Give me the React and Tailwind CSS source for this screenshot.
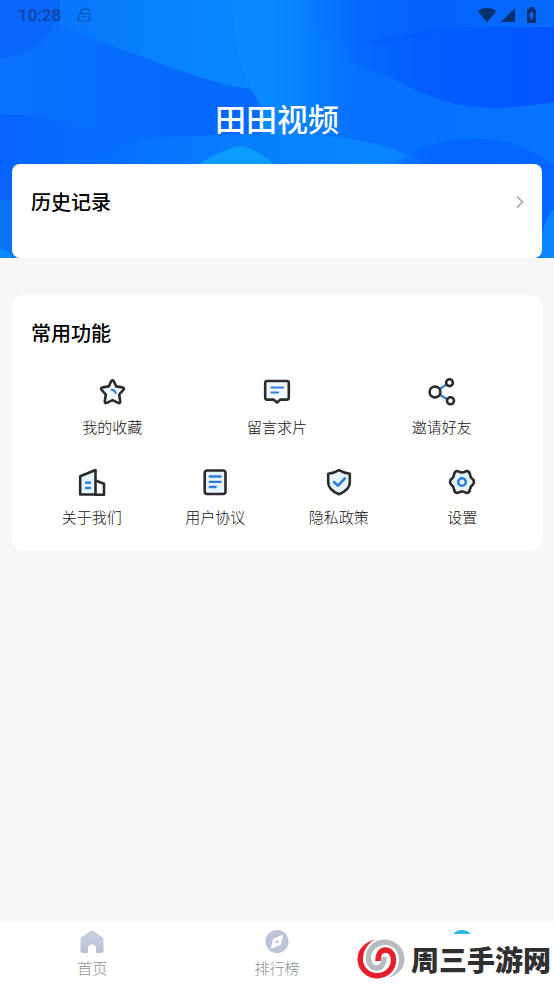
import React from "react";

const INK = "#2b2b2b";
const BLUE = "#2f7fd6";
const TINT = "#e6f4fd";

const Icon = ({ children }) => (
  <svg
    className="size-7"
    viewBox="0 0 28 28"
    fill="none"
    stroke={INK}
    strokeWidth="2.600"
    strokeLinecap="round"
    strokeLinejoin="round"
    aria-hidden="true"
  >
    {children}
  </svg>
);

const StarIcon = () => (
  <Icon>
    <path
      d="M14.500 2.200c.6 0 1 .4 1.300 1l2.400 5.200 6.300 1c1.500.3 1.900 1.400.9 2.400l-4.200 4.700 1 6.800c.2 1.500-.8 2.200-2 1.500l-5.700-2.700-5.700 2.700c-1.200.7-2.200 0-2-1.500l1-6.800-4.200-4.700c-1-1-.6-2.100.9-2.400l6.300-1 2.400-5.200c.3-.6.700-1 1.300-1z"
      fill="#f3fafe"
    />
    <path d="M13.500 11.800c2.200 0 3.600 1.300 4.200 3.200" stroke={BLUE} strokeWidth="2" />
  </Icon>
);

const MessageIcon = () => (
  <Icon>
    <path
      d="M4 3h20a1.800 1.800 0 0 1 1.800 1.800v15a1.800 1.800 0 0 1-1.800 1.800h-6.500L14 24.600l-3.500-3H4a1.800 1.800 0 0 1-1.800-1.800v-15A1.800 1.800 0 0 1 4 3z"
      fill="#f3fafe"
    />
    <path d="M8.500 9.500h11.500M8.500 14.500h6.500" stroke={BLUE} strokeWidth="2.200" />
  </Icon>
);

const ShareIcon = () => (
  <Icon>
    <path d="M12.500 10.500l5.500-3.600M12.500 17.300l5.500 3.200" stroke={BLUE} strokeWidth="2.200" />
    <circle cx="7" cy="14" r="5.400" fill="#fff" />
    <circle cx="21.500" cy="4.700" r="3.400" fill="#fff" />
    <circle cx="22.500" cy="22.800" r="3.500" fill="#fff" />
  </Icon>
);

const BuildingIcon = () => (
  <Icon>
    <path d="M17.500 12.500l8.500 3.200v11h-8.500" />
    <path d="M2.200 26.500V8.200L17.500 2v24.500z" fill={TINT} />
    <path d="M8 14.800h4M8 20h4" stroke={BLUE} strokeWidth="2.400" />
  </Icon>
);

const DocumentIcon = () => (
  <Icon>
    <rect x="3.700" y="2.500" width="20.800" height="23.500" rx="2.500" fill={TINT} />
    <path d="M8.700 8.500h11M8.700 13.800h11M8.700 19h6" stroke={BLUE} strokeWidth="2.300" />
  </Icon>
);

const ShieldIcon = () => (
  <Icon>
    <path
      d="M14 2.200c3 2 6.500 3 10.800 3.500v8.800c0 5.500-4.800 9.200-10.800 11.800C8 23.700 3.200 20 3.200 14.500V5.700C7.500 5.200 11 4.200 14 2.200z"
      fill={TINT}
    />
    <path d="M9 14l4 3.700 6.800-7.200" stroke={BLUE} strokeWidth="2.600" />
  </Icon>
);

const GearIcon = () => (
  <Icon>
    <path
      d="M9.300 3c1.400 0 2 1.500 4.700 1.500S17.300 3 18.700 3c1.500 0 3 1.500 3.300 3.700.2 2.500.8 3.300 2.600 4.500 1.800 1.200 1.800 4.400 0 5.600-1.800 1.200-2.400 2-2.600 4.500-.3 2.200-1.800 3.700-3.300 3.700-1.400 0-2-1.500-4.700-1.500S10.700 25 9.300 25C7.800 25 6.300 23.500 6 21.300c-.2-2.500-.8-3.300-2.600-4.500-1.800-1.200-1.800-4.400 0-5.600C5.200 10 5.800 9.200 6 6.700 6.300 4.500 7.800 3 9.300 3z"
      fill={TINT}
    />
    <circle cx="14" cy="14" r="3.800" stroke={BLUE} strokeWidth="2.600" />
  </Icon>
);

const featureRows = [
  [
    { label: "我的收藏", icon: StarIcon },
    { label: "留言求片", icon: MessageIcon },
    { label: "邀请好友", icon: ShareIcon },
  ],
  [
    { label: "关于我们", icon: BuildingIcon },
    { label: "用户协议", icon: DocumentIcon },
    { label: "隐私政策", icon: ShieldIcon },
    { label: "设置", icon: GearIcon },
  ],
];

const HeroBackground = () => (
  <svg
    className="absolute inset-0 size-full"
    viewBox="0 0 554 258"
    preserveAspectRatio="none"
    aria-hidden="true"
  >
    <defs>
      <linearGradient id="base" x1="0" x2="1">
        <stop offset="0" stopColor="#0a72fd" />
        <stop offset="0.35" stopColor="#0669fe" />
        <stop offset="1" stopColor="#0670ff" />
      </linearGradient>
      <linearGradient id="band" x1="0" x2="1">
        <stop offset="0" stopColor="#0876fd" />
        <stop offset="0.5" stopColor="#0782fe" />
        <stop offset="1" stopColor="#0787ff" />
      </linearGradient>
      <linearGradient id="mid" x1="0" x2="1">
        <stop offset="0" stopColor="#098bff" />
        <stop offset="0.12" stopColor="#088aff" />
        <stop offset="0.4" stopColor="#066fff" />
        <stop offset="1" stopColor="#0774ff" />
      </linearGradient>
      <linearGradient id="dark" x1="0" x2="1">
        <stop offset="0" stopColor="#0359ff" stopOpacity="0" />
        <stop offset="0.4" stopColor="#0359ff" stopOpacity="0.8" />
        <stop offset="1" stopColor="#0254ff" />
      </linearGradient>
      <linearGradient id="darkTop" x1="0" x2="1">
        <stop offset="0" stopColor="#0357fa" stopOpacity="0" />
        <stop offset="0.5" stopColor="#0357fa" stopOpacity="0.6" />
        <stop offset="1" stopColor="#0357fa" stopOpacity="0.3" />
      </linearGradient>
      <linearGradient id="lowerLeft" x1="0" x2="1">
        <stop offset="0" stopColor="#0762fd" />
        <stop offset="1" stopColor="#0667fe" stopOpacity="0" />
      </linearGradient>
      <linearGradient id="wave" x1="0" x2="1">
        <stop offset="0" stopColor="#0669fe" />
        <stop offset="0.3" stopColor="#0779ff" />
        <stop offset="0.8" stopColor="#0886ff" />
        <stop offset="1" stopColor="#087bff" />
      </linearGradient>
      <linearGradient id="lowerRight" x1="0" x2="1">
        <stop offset="0" stopColor="#0464ff" stopOpacity="0" />
        <stop offset="0.35" stopColor="#0464ff" />
        <stop offset="1" stopColor="#0466ff" />
      </linearGradient>
    </defs>
    <path d="M0 0h554v258H0z" fill="url(#base)" />
    <path d="M0 115C40 112 75 120 110 142V200H0z" fill="url(#lowerLeft)" />
    <path d="M0 0h60C60 32 35 55 0 58z" fill="#0866fb" />
    <path d="M60 0h200v92C250 88 240 88 222 84 160 65 110 45 60 25z" fill="url(#band)" />
    <path d="M232 0C232 45 245 80 262 108V164h292V0z" fill="url(#mid)" />
    <path d="M330 42C380 45 420 27 470 27h84v75C500 111 465 110 430 96 395 82 370 65 330 55z" fill="url(#dark)" />
    <path d="M300 0h254v27h-84C440 27 400 46 355 46 325 40 300 20 300 0z" fill="url(#darkTop)" />
    <path d="M75 170C110 145 130 139 170 137 230 134 330 130 380 145 410 154 430 162 450 175z" fill="url(#wave)" />
    <path d="M180 175C205 160 220 150 240 146 260 150 270 160 285 175z" fill="#0a9cff" />
    <path d="M380 175C410 148 440 139 475 139 515 139 535 153 554 164V258H530V175z" fill="url(#lowerRight)" />
    <path d="M554 210C546 215 540 235 540 258h14z" fill="#0a86ff" />
    <path d="M0 248c5 2 12 5 14 10H0z" fill="#0a86ff" />
  </svg>
);

const StatusBar = () => (
  <div className="flex h-[30px] items-center justify-between px-[18px] text-[#05316f]">
    <div className="flex items-center gap-4">
      <span className="font-[Roboto,sans-serif] text-[17px] leading-5 font-medium text-[#0a449f]">10:28</span>
      <svg className="size-3.5" viewBox="0 0 14 14" fill="none" stroke="#0a54b0" strokeWidth="1.200" aria-hidden="true">
        <path d="M2 5.500h11l-1 7.500H1zM3.500 5.500C3.500 2 6 .8 8.500.8S12.500 2 12.500 4M4.500 8.500h5" />
      </svg>
    </div>
    <div className="flex items-center gap-1" aria-hidden="true">
      <svg className="h-4 w-5" viewBox="0 0 20 16" fill="currentColor">
        <path d="M10 15.500L.8 4.200C3 2.200 6.300 1 10 1s7 1.200 9.200 3.200z" />
      </svg>
      <svg className="h-4 w-3.5" viewBox="0 0 14 16" fill="currentColor">
        <path d="M14 1v14H0z" />
      </svg>
      <svg className="h-4 w-[17px]" viewBox="0 0 17 16" fill="currentColor" fillRule="evenodd">
        <path d="M10.500 0h4v1.800H16a1 1 0 0 1 1 1V15a1 1 0 0 1-1 1H9a1 1 0 0 1-1-1V2.800a1 1 0 0 1 1-1h1.500zM12.500 4.200l-2 3.300 1.300 5 1.400 0 1.300-5z" />
      </svg>
    </div>
  </div>
);

const HomeIcon = () => (
  <svg className="size-6" viewBox="0 0 24 24" aria-hidden="true">
    <defs>
      <linearGradient id="nav-fill" x1="0" x2="0" y1="0" y2="1">
        <stop offset="0" stopColor="#c9d0dd" />
        <stop offset="1" stopColor="#b9c2d6" />
      </linearGradient>
    </defs>
    <path
      d="M10.600 1a2.500 2.500 0 0 1 3 0l9 6.600c.6.500.9 1 .9 1.800V21a2 2 0 0 1-2 2H16v-4.500a4 4 0 0 0-8 0V23H2.500a2 2 0 0 1-2-2V9.400c0-.8.300-1.300.900-1.800z"
      fill="url(#nav-fill)"
    />
  </svg>
);

const CompassIcon = () => (
  <svg className="size-6" viewBox="0 0 24 24" aria-hidden="true">
    <circle cx="12" cy="11.500" r="11.500" fill="#bcc5d7" />
    <path d="M17.500 5.500l-2 9-9 3.500 2-9z" fill="#fff" stroke="#fff" strokeLinejoin="round" />
    <circle cx="12" cy="11.700" r="1.500" fill="#bcc5d7" />
  </svg>
);

const ProfileIcon = () => (
  <svg className="size-6" viewBox="0 0 24 24" aria-hidden="true">
    <circle cx="12" cy="11.800" r="11.800" fill="#31b8ea" />
  </svg>
);

const Swirl = ({ color, transform }) => (
  <g transform={transform}>
    <path d="M18 .5C8 3 .5 10 .5 20c0 11 9 19.500 20 19.500V34C12 34 6 28 6 20 6 12 10 5 18 .5z" fill={color} />
    <path
      d="M20 36.700C30 36.700 36.500 29.500 36.500 21 36.500 15 33 11 28.500 11 24 11 21 14.500 21 22"
      stroke={color}
      strokeWidth="5.400"
    />
  </g>
);

const SiteMark = () => (
  <div className="absolute right-0 bottom-0 flex h-[50px] items-center gap-1.5 bg-white pr-[3px] pl-1">
    <svg className="h-10 w-12" viewBox="0 0 48 40" fill="none" aria-hidden="true">
      <Swirl color="#b9bbbe" transform="rotate(180 24 20)" />
      <Swirl color="#e5202b" />
    </svg>
    <span className="text-[28px] leading-9 font-black text-[#2f2f31]">周三手游网</span>
  </div>
);

const App = () => {
  return (
    <div className="flex min-h-screen flex-col bg-[#f7f7f8] font-['Noto_Sans_CJK_SC',sans-serif] text-black">
      <header className="relative isolate">
        <HeroBackground />
        <div className="relative">
          <StatusBar />
          <h1 className="pt-[66px] pb-6 text-center text-[31px] leading-11 font-medium text-white">田田视频</h1>
          <div className="px-3">
            <section className="h-[94px] rounded-lg bg-white pt-6 pr-4 pl-[19px]">
              <button type="button" className="flex w-full items-center justify-between">
                <span className="text-xl leading-7 font-medium">历史记录</span>
                <svg className="h-4 w-3" viewBox="0 0 12 16" fill="none" stroke="#a6a6a6" strokeWidth="1.700" aria-hidden="true">
                  <path d="M3 2.500l5.500 5.500L3 13.500" />
                </svg>
              </button>
            </section>
          </div>
        </div>
      </header>

      <main className="flex-1 px-3 pt-[37px] pb-6">
        <section className="rounded-xl bg-white px-[18px] py-6">
          <h2 className="px-px text-xl leading-7 font-medium">常用功能</h2>
          <div className="mt-[31px] flex flex-col gap-[31px]">
            {featureRows.map((row, index) => (
              <div key={index} className="flex">
                {row.map(({ label, icon: FeatureIcon }) => (
                  <button key={label} type="button" className="flex flex-1 flex-col items-center gap-[11px]">
                    <FeatureIcon />
                    <span className="text-[15px] leading-5 font-light text-[#111]">{label}</span>
                  </button>
                ))}
              </div>
            ))}
          </div>
        </section>
      </main>

      <nav className="relative flex h-[62px] bg-white pt-2 text-[15px] leading-5 font-light text-[#909090]">
        <a href="#home" className="flex flex-1 flex-col items-center gap-1">
          <HomeIcon />
          首页
        </a>
        <a href="#rank" className="flex flex-1 flex-col items-center gap-1">
          <CompassIcon />
          排行榜
        </a>
        <a href="#profile" aria-label="我的" className="flex flex-1 flex-col items-center gap-1">
          <ProfileIcon />
        </a>
        <SiteMark />
      </nav>
    </div>
  );
};

export default App;
